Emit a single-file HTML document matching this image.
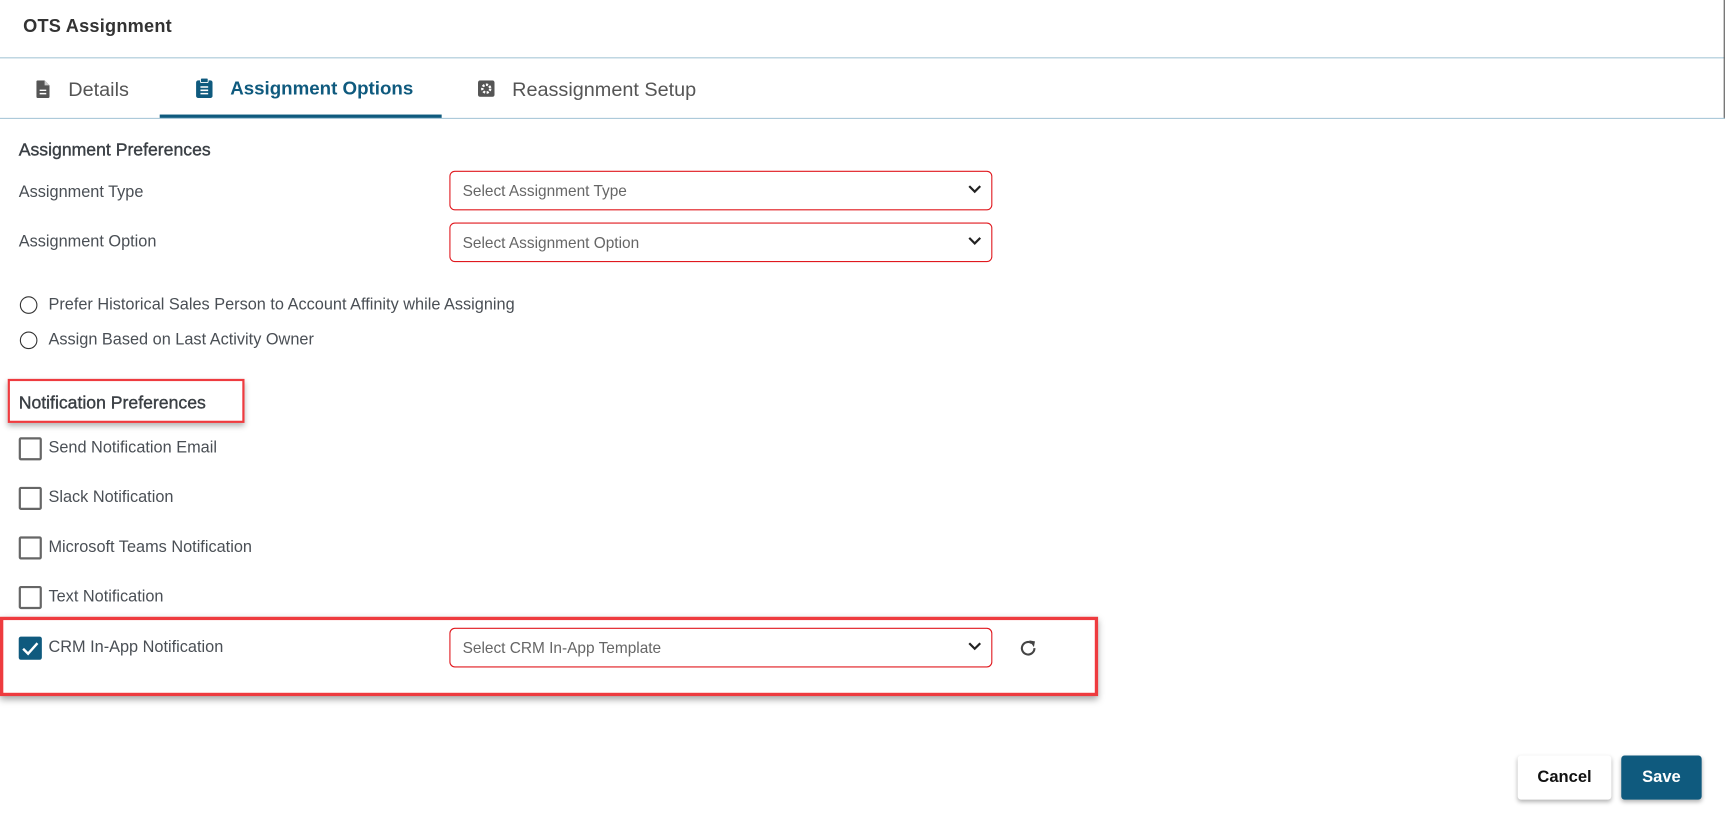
<!DOCTYPE html>
<html><head><meta charset="utf-8"><style>
html,body{margin:0;padding:0;background:#fff;overflow:hidden;width:1727px;height:820px}
#w{position:absolute;left:0;top:0;width:1568px;height:745px;transform:scale(1.10140);transform-origin:0 0;font-family:"Liberation Sans",sans-serif;color:#444}
.a{position:absolute;white-space:nowrap}
.lbl{font-size:14.8px;color:#4a4f55;transform:translateY(-50%)}
.sel{position:absolute;left:408px;width:491px;height:34px;border:1px solid #e0191f;border-radius:5px;box-sizing:content-box}
.sel span{position:absolute;left:11px;top:9px;font-size:14px;color:#666}
.sel svg{position:absolute;right:9px;top:12px}
.cb{position:absolute;left:17px;width:17px;height:17px;border:2px solid #666;border-radius:2px}
.rd{position:absolute;left:18px;width:14px;height:14px;border:1.5px solid #333;border-radius:50%}
.h{font-size:16px;color:#3a3f44;-webkit-text-stroke:.35px #3a3f44}
</style></head><body><div id="w">
<div class="a" style="left:21px;top:15px;font-size:16.5px;color:#333;font-weight:bold;letter-spacing:.2px">OTS Assignment</div>
<div class="a" style="left:0;top:52px;width:1566px;height:1px;background:#a9c8d8"></div>
<div class="a" style="left:1565px;top:0;width:1px;height:108px;background:#555"></div>
<div class="a" style="left:0;top:107px;width:1566px;height:1px;background:#a9c8d8"></div>
<div class="a" style="left:145px;top:104px;width:256px;height:3px;background:#0f5a7e"></div>
<svg class="a" style="left:33px;top:73px" width="12" height="16" viewBox="0 0 12 16"><path d="M0 1.5Q0 0 1.5 0H7.5L12 4.5V14.5Q12 16 10.5 16H1.5Q0 16 0 14.5Z" fill="#555"/><path d="M3 9h6M3 12h6" stroke="#fff" stroke-width="1.3"/><path d="M7.5 0V4.5H12" fill="#ccc"/></svg>
<div class="a" style="left:62px;top:71px;font-size:18px;color:#555">Details</div>
<svg class="a" style="left:178px;top:71px" width="15" height="18" viewBox="0 0 15 18"><rect x="0" y="2" width="15" height="16" rx="2" fill="#0f5a7e"/><rect x="4" y="0" width="7" height="4" rx="1" fill="#0f5a7e" stroke="#fff" stroke-width=".8"/><path d="M4 8h7M4 11h7M4 14h7" stroke="#fff" stroke-width="1.4"/></svg>
<div class="a" style="left:209px;top:71px;font-size:17px;color:#0f5a7e;font-weight:bold">Assignment Options</div>
<svg class="a" style="left:434px;top:73px" width="15" height="15" viewBox="0 0 15 15"><rect width="15" height="15" rx="2" fill="#555"/><circle cx="7.5" cy="7.5" r="3.6" fill="none" stroke="#fff" stroke-width="2.2" stroke-dasharray="2 1.3"/><circle cx="7.5" cy="7.5" r="1.3" fill="#555"/></svg>
<div class="a" style="left:465px;top:71px;font-size:18px;color:#555">Reassignment Setup</div>

<div class="a h" style="left:17px;top:128px">Assignment Preferences</div>
<div class="a lbl" style="left:17px;top:175px">Assignment Type</div>
<div class="a lbl" style="left:17px;top:220px">Assignment Option</div>
<div class="sel" style="top:155px"><span>Select Assignment Type</span><svg width="12" height="8" viewBox="0 0 12 8"><path d="M1 1l5 5 5-5" fill="none" stroke="#222" stroke-width="2"/></svg></div>
<div class="sel" style="top:202px"><span>Select Assignment Option</span><svg width="12" height="8" viewBox="0 0 12 8"><path d="M1 1l5 5 5-5" fill="none" stroke="#222" stroke-width="2"/></svg></div>

<div class="rd" style="top:269px"></div>
<div class="a lbl" style="left:44px;top:277px">Prefer Historical Sales Person to Account Affinity while Assigning</div>
<div class="rd" style="top:301px"></div>
<div class="a lbl" style="left:44px;top:309px">Assign Based on Last Activity Owner</div>

<div class="a" style="left:7px;top:344px;width:211px;height:36px;border:2px solid #ee3b3f;box-shadow:0 3px 5px rgba(0,0,0,.3)"></div>
<div class="a h" style="left:17px;top:358px">Notification Preferences</div>

<div class="cb" style="top:397px"></div><div class="a lbl" style="left:44px;top:407px">Send Notification Email</div>
<div class="cb" style="top:442px"></div><div class="a lbl" style="left:44px;top:452px">Slack Notification</div>
<div class="cb" style="top:487px"></div><div class="a lbl" style="left:44px;top:497px">Microsoft Teams Notification</div>
<div class="cb" style="top:532px"></div><div class="a lbl" style="left:44px;top:542px">Text Notification</div>

<div class="a" style="left:0;top:560px;width:991px;height:66px;border:3px solid #ee3b3f;box-shadow:0 3px 6px rgba(0,0,0,.35)"></div>
<div class="a" style="left:17px;top:578px;width:21px;height:21px;background:#0f5a7e;border-radius:2px"><svg width="21" height="21" viewBox="0 0 21 21"><path d="M4 11l4.5 4.5L17 6" fill="none" stroke="#fff" stroke-width="2.2"/></svg></div>
<div class="a lbl" style="left:44px;top:588px">CRM In-App Notification</div>
<div class="sel" style="top:570px"><span>Select CRM In-App Template</span><svg width="12" height="8" viewBox="0 0 12 8"><path d="M1 1l5 5 5-5" fill="none" stroke="#222" stroke-width="2"/></svg></div>
<svg class="a" style="left:924px;top:579px" width="19" height="19" viewBox="0 0 20 20"><path d="M16 10A6 6 0 1 1 13.5 5.2" fill="none" stroke="#444" stroke-width="2"/><path d="M11 2.5L16.5 3.5 15.5 9Z" fill="#444"/></svg>

<div class="a" style="left:1378px;top:686px;width:85px;height:40px;background:#fff;border-radius:3px;box-shadow:0 2px 4px rgba(0,0,0,.3);font-size:15px;font-weight:bold;color:#111;text-align:center;line-height:40px">Cancel</div>
<div class="a" style="left:1472px;top:686px;width:73px;height:40px;background:#0f5a7e;border-radius:3px;box-shadow:0 2px 4px rgba(0,0,0,.3);font-size:15px;font-weight:bold;color:#fff;text-align:center;line-height:40px">Save</div>
</div></body></html>
